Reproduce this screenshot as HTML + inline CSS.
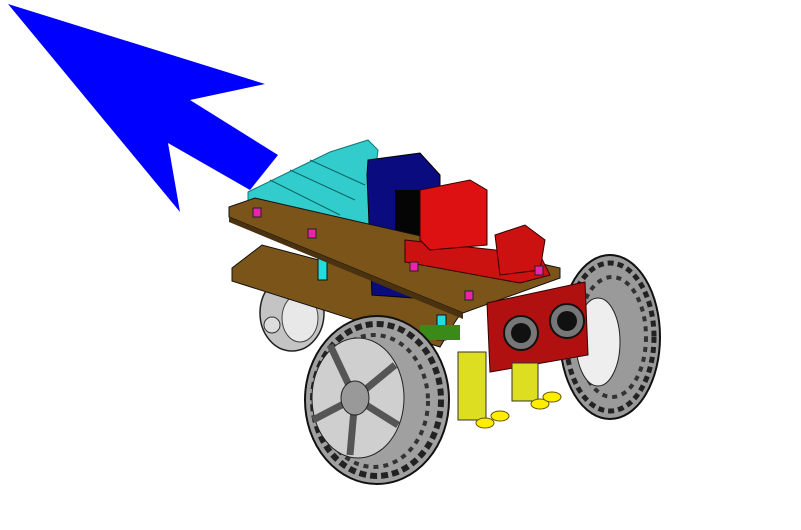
<!DOCTYPE html>
<html><head><style>html,body{margin:0;padding:0;background:#fff;width:801px;height:530px;overflow:hidden}</style></head>
<body>
<svg width="801" height="530" viewBox="0 0 801 530" xmlns="http://www.w3.org/2000/svg">
<polygon points="8,4 265,84 190,100 278,155 250,190 168,143 180,212" fill="#0000ff"/>
<!-- rear caster -->
<ellipse cx="292" cy="313" rx="32" ry="38" fill="#c4c4c4" stroke="#222" stroke-width="1.5"/>
<ellipse cx="300" cy="318" rx="18" ry="24" fill="#e8e8e8" stroke="#444"/>
<circle cx="272" cy="325" r="8" fill="#ddd" stroke="#333"/>
<!-- right wheel -->
<ellipse cx="610" cy="337" rx="50" ry="82" fill="#9a9a9a" stroke="#111" stroke-width="2"/>
<ellipse cx="610" cy="337" rx="44" ry="74" fill="none" stroke="#222" stroke-width="5" stroke-dasharray="6 4"/>
<ellipse cx="612" cy="337" rx="34" ry="60" fill="none" stroke="#333" stroke-width="4" stroke-dasharray="5 5"/>
<ellipse cx="598" cy="342" rx="22" ry="44" fill="#eee" stroke="#222"/>
<!-- lower plate -->
<polygon points="232,268 262,245 470,300 455,322 440,347 232,281" fill="#7a5418" stroke="#111"/>
<!-- standoffs -->
<rect x="318" y="255" width="9" height="25" fill="#22dddd" stroke="#111"/>
<rect x="437" y="315" width="9" height="25" fill="#22dddd" stroke="#111"/>
<!-- cyan board -->
<polygon points="248,192 330,152 368,140 378,150 368,230 325,235 248,205" fill="#33cccc" stroke="#117777"/>
<g stroke="#0a6666" stroke-width="1">
<line x1="270" y1="180" x2="340" y2="215"/><line x1="290" y1="170" x2="355" y2="200"/><line x1="310" y1="160" x2="365" y2="185"/>
</g>
<!-- battery -->
<polygon points="368,160 420,153 440,175 440,300 372,295 367,175" fill="#0b0b80" stroke="#000"/>
<rect x="395" y="190" width="30" height="90" fill="#050505"/>
<!-- upper plate -->
<polygon points="229,207 255,198 560,268 560,278 463,313 229,217" fill="#7a5418" stroke="#111"/>
<polygon points="229,217 463,313 463,319 229,222" fill="#4a3210"/>
<!-- red board -->
<polygon points="405,240 540,255 550,275 520,283 405,262" fill="#cc1111" stroke="#330000"/>
<polygon points="420,190 470,180 487,190 487,245 430,250 420,240" fill="#dd1111" stroke="#330000"/>
<polygon points="495,235 525,225 545,240 540,270 500,275" fill="#cc1111" stroke="#330000"/>
<!-- pink nuts -->
<g fill="#ee22aa" stroke="#222">
<rect x="253" y="208" width="8" height="9"/><rect x="308" y="229" width="8" height="9"/><rect x="410" y="262" width="8" height="9"/><rect x="465" y="291" width="8" height="9"/><rect x="535" y="266" width="8" height="9"/>
</g>
<!-- sensor -->
<polygon points="487,303 585,282 588,355 490,372" fill="#b01010" stroke="#300"/>
<circle cx="521" cy="333" r="17" fill="#777" stroke="#111" stroke-width="2"/><circle cx="521" cy="333" r="10" fill="#111"/>
<circle cx="567" cy="321" r="17" fill="#777" stroke="#111" stroke-width="2"/><circle cx="567" cy="321" r="10" fill="#111"/>
<!-- yellow modules -->
<rect x="420" y="325" width="40" height="15" fill="#3a8a1a"/>
<rect x="458" y="352" width="28" height="68" fill="#dddd22" stroke="#333"/>
<rect x="512" y="363" width="26" height="38" fill="#dddd22" stroke="#333"/>
<g fill="#ffee00" stroke="#665500">
<ellipse cx="485" cy="423" rx="9" ry="5"/><ellipse cx="500" cy="416" rx="9" ry="5"/><ellipse cx="540" cy="404" rx="9" ry="5"/><ellipse cx="552" cy="397" rx="9" ry="5"/>
</g>
<!-- front wheel -->
<ellipse cx="377" cy="400" rx="72" ry="84" fill="#a0a0a0" stroke="#111" stroke-width="2"/>
<ellipse cx="377" cy="400" rx="64" ry="76" fill="none" stroke="#222" stroke-width="6" stroke-dasharray="7 4"/>
<ellipse cx="374" cy="401" rx="54" ry="66" fill="none" stroke="#333" stroke-width="4" stroke-dasharray="5 5"/>
<ellipse cx="358" cy="398" rx="46" ry="60" fill="#cfcfcf" stroke="#222"/>
<g stroke="#555" stroke-width="7">
<line x1="355" y1="398" x2="330" y2="345"/><line x1="355" y1="398" x2="395" y2="365"/><line x1="355" y1="398" x2="398" y2="425"/><line x1="355" y1="398" x2="350" y2="455"/><line x1="355" y1="398" x2="313" y2="420"/>
</g>
<ellipse cx="355" cy="398" rx="14" ry="17" fill="#999" stroke="#222"/>
</svg>
</body></html>
